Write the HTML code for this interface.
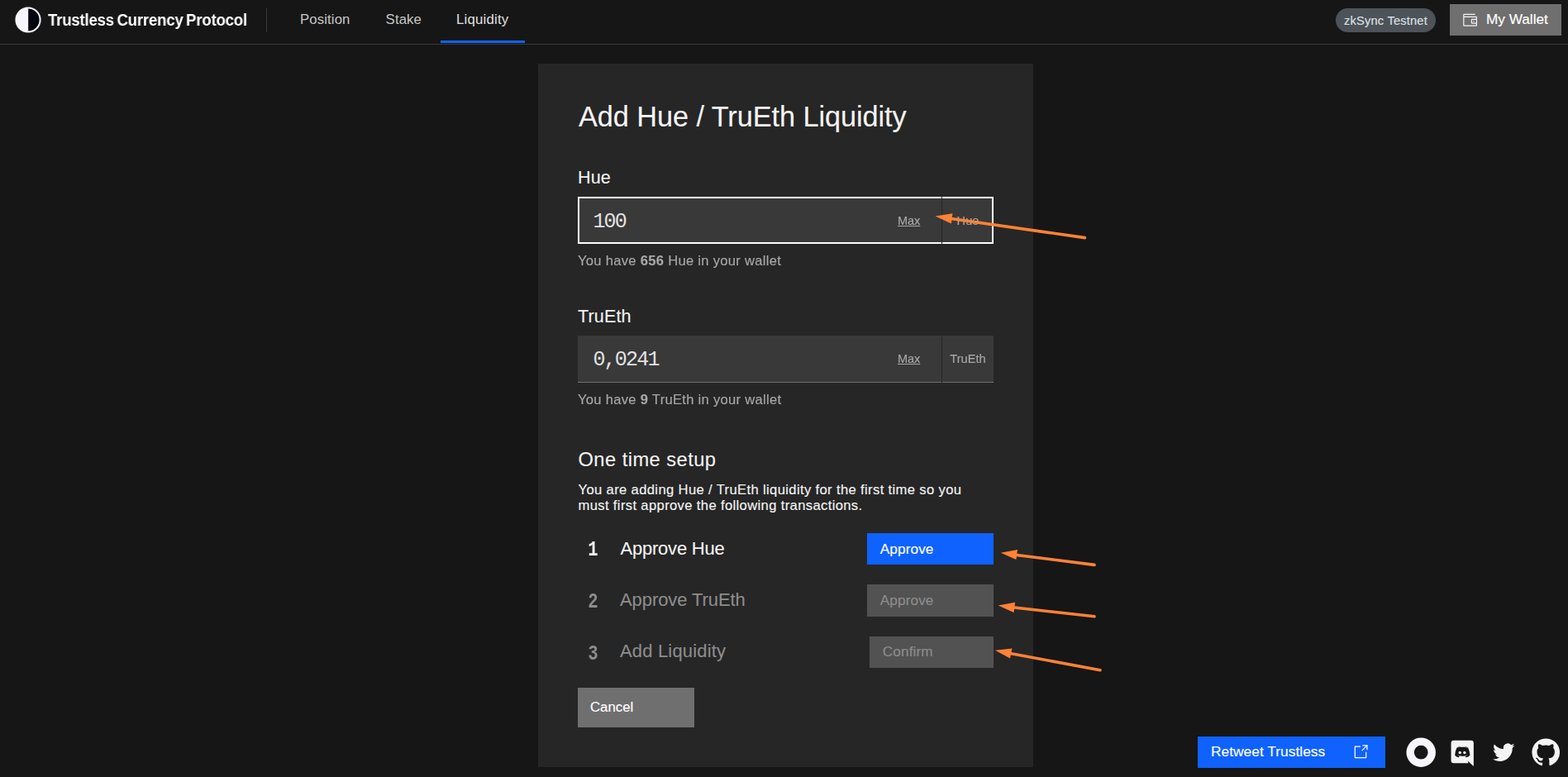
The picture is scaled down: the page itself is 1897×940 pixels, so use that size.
<!DOCTYPE html>
<html lang="en">
<head>
<meta charset="utf-8">
<title>Trustless Currency Protocol - Add Liquidity</title>
<style>
*{box-sizing:border-box;margin:0;padding:0}
html,body{width:1897px;height:940px;overflow:hidden;background:#161616}
body{font-family:"Liberation Sans",sans-serif;color:#f4f4f4;position:relative;-webkit-font-smoothing:auto}
a{color:inherit;text-decoration:none}
button{font-family:inherit;border:0;cursor:pointer}
.abs{position:absolute;white-space:nowrap}

/* ---------- header ---------- */
header{position:absolute;left:0;top:0;width:1897px;height:54px;border-bottom:1px solid #393939;background:#161616}
.logo{position:absolute;left:17.5px;top:8px;width:32px;height:32px}
.brand{left:57.5px;top:11.5px;height:24px;line-height:24px;font-size:20.3px;font-weight:700;letter-spacing:-.25px;word-spacing:-1.5px;color:#fff;transform:scaleX(.92);transform-origin:0 50%;will-change:transform}
.vdiv{position:absolute;left:322px;top:10px;width:1px;height:29px;background:#393939}
nav a{position:absolute;top:0;height:53px;line-height:48px;font-size:16.8px;letter-spacing:.1px;color:#c6c6c6;padding:0 19px;white-space:nowrap}
nav a.on{color:#e0e0e0}
nav a.on::after{content:"";position:absolute;left:0;right:0;bottom:1px;height:3px;background:#0f62fe}
.tag{left:1616px;top:10px;width:121px;height:29px;border-radius:15px;background:#4d5358;color:#dde1e6;font-size:14.6px;line-height:31px;text-align:center;letter-spacing:.22px}
.wallet{position:absolute;left:1754px;top:5px;width:135px;height:38px;background:#6f6f6f;color:#fff;font-size:17.2px;letter-spacing:0;line-height:36px;text-align:left;padding:0 0 2px 44px;white-space:nowrap}
.wallet svg{position:absolute;left:14.6px;top:9.8px;width:19.2px;height:19.2px;fill:#f4f4f4}

/* ---------- card ---------- */
main{position:absolute;left:651px;top:77px;width:599px;height:851px;background:#262626}
h1{left:49px;top:41.5px;font-size:34.3px;line-height:44px;font-weight:400;color:#f4f4f4;letter-spacing:-.07px}
.lbl{left:48px;font-size:21.6px;line-height:28px;color:#f4f4f4;font-weight:400;letter-spacing:.12px}
.field{position:absolute;left:48px;width:503px;height:57px;background:#393939;border-bottom:1px solid #6f6f6f}
.field.focus{border-bottom:0;outline:2px solid #fff;outline-offset:-2px}
.field input{position:absolute;left:0;top:0;width:440px;height:100%;background:transparent;border:0;outline:0;color:#e2e2e2;font-family:"Liberation Mono",monospace;font-size:25px;letter-spacing:-1.8px;padding:3px 0 0 18.4px;line-height:30px}
.field .sep{position:absolute;left:440px;top:0;width:1px;height:57px;background:#262626}
.field.focus .sep{top:0;height:57px}
.field.focus .max,.field.focus .unit{top:1px}
.field .max{position:absolute;left:387px;top:0;line-height:57px;font-size:14.6px;letter-spacing:-.1px;color:#a8a8a8;text-decoration:underline}
.field .unit{position:absolute;left:441px;top:0;width:62px;line-height:57px;font-size:14.6px;color:#a8a8a8;text-align:center}
.help{left:48px;font-size:16.6px;line-height:20px;color:#a8a8a8;letter-spacing:.28px}
.help b{font-weight:700}
.help,.field .max,.field .unit{will-change:transform}
.help,.desc,.field .unit,.field .max,.btn,.cancel,.wallet,.tag,.retweet{-webkit-text-stroke:.14px currentColor}
h1,h2,.lbl,ol li .t{-webkit-text-stroke:.1px currentColor}
h2{left:48.5px;top:464px;font-size:23.7px;line-height:30px;font-weight:400;letter-spacing:.45px}
.desc{position:absolute;left:48.5px;top:506px;width:480px;font-size:16.6px;line-height:19.3px;color:#f4f4f4;letter-spacing:.36px}
ol{list-style:none}
ol li{position:absolute;left:48px;width:503px;height:40px}
ol li .n{position:absolute;left:11.3px;top:2px;width:15px;text-align:center;line-height:40px;font-family:"Liberation Mono",monospace;font-size:25px;font-weight:700;color:#f4f4f4;transform:scaleX(.8);transform-origin:50% 50%;will-change:transform}
ol li .t{position:absolute;left:51px;top:0;line-height:40px;font-size:22px;letter-spacing:-.08px;color:#f4f4f4;white-space:nowrap}
ol li.off .n,ol li.off .t{color:#8d8d8d}
.btn{position:absolute;height:38px;line-height:20px;font-size:17.2px;letter-spacing:.1px;text-align:left;padding:0 0 0 15.8px;color:#fff;background:#0f62fe;white-space:nowrap}
.btn.dis{background:#525252;color:#8d8d8d;padding-bottom:2px}
.cancel{position:absolute;left:48px;top:755px;width:141px;height:48px;background:#6f6f6f;color:#fff;font-size:16.8px;line-height:48px;text-align:left;padding-left:15px}

/* ---------- footer ---------- */
.retweet{position:absolute;left:1449px;top:891px;width:227px;height:38px;background:#0f62fe;color:#fff;font-size:17.4px;line-height:36px;padding-left:16px;white-space:nowrap}
.retweet svg{position:absolute;left:187px;top:9.2px;width:20px;height:19.6px;fill:#fff}
.soc{position:absolute;top:890.5px;width:38.4px;height:38.4px;fill:#f4f4f4}
.arrows{position:absolute;left:0;top:0;width:1897px;height:940px;pointer-events:none}
</style>
</head>
<body>
<header>
  <svg class="logo" viewBox="0 0 32 32" aria-hidden="true"><circle cx="16" cy="16" r="15.6" fill="#f6f6fc"/><path d="M16.2 2.6a13.4 13.4 0 0 1 0 26.8z" fill="#05060f"/></svg>
  <a class="abs brand" href="#">Trustless Currency Protocol</a>
  <span class="vdiv"></span>
  <nav>
    <a href="#" style="left:344px">Position</a>
    <a href="#" style="left:447.6px">Stake</a>
    <a href="#" class="on" style="left:533px;width:102px;letter-spacing:.2px">Liquidity</a>
  </nav>
  <span class="abs tag">zkSync Testnet</span>
  <button class="wallet" type="button"><svg viewBox="0 0 32 32" aria-hidden="true"><path d="M22 17H24V19H22z"/><path d="M28,8H4V5H26V3H4A2,2,0,0,0,2,5V26a2,2,0,0,0,2,2H28a2,2,0,0,0,2-2V10A2,2,0,0,0,28,8ZM4,26V10H28v3H20a2,2,0,0,0-2,2v6a2,2,0,0,0,2,2h8v3ZM28,15v6H20V15Z"/></svg>My Wallet</button>
</header>

<main>
  <h1 class="abs">Add Hue / TruEth Liquidity</h1>

  <label class="abs lbl" style="top:124px" for="hue">Hue</label>
  <div class="field focus" style="top:161px">
    <input id="hue" type="text" value="100">
    <a class="max" href="#">Max</a>
    <span class="sep"></span>
    <span class="unit">Hue</span>
  </div>
  <p class="abs help" style="top:229px">You have <b>656</b> Hue in your wallet</p>

  <label class="abs lbl" style="top:292px" for="trueth">TruEth</label>
  <div class="field" style="top:329px">
    <input id="trueth" type="text" value="0,0241">
    <a class="max" href="#">Max</a>
    <span class="sep"></span>
    <span class="unit">TruEth</span>
  </div>
  <p class="abs help" style="top:397px">You have <b>9</b> TruEth in your wallet</p>

  <h2 class="abs">One time setup</h2>
  <p class="desc">You are adding Hue / TruEth liquidity for the first time so you must first approve the following transactions.</p>

  <ol>
    <li style="top:567px"><span class="n">1</span><span class="t" style="left:51.5px;letter-spacing:-.22px">Approve Hue</span><button class="btn" type="button" style="left:350px;top:1px;width:153px">Approve</button></li>
    <li class="off" style="top:629px"><span class="n" style="top:3px">2</span><span class="t">Approve TruEth</span><button class="btn dis" type="button" disabled style="left:350px;top:1px;width:153px;height:39px">Approve</button></li>
    <li class="off" style="top:691px"><span class="n" style="top:4px">3</span><span class="t" style="letter-spacing:.17px">Add Liquidity</span><button class="btn dis" type="button" disabled style="left:353px;top:2px;width:150px">Confirm</button></li>
  </ol>

  <button class="cancel" type="button">Cancel</button>
</main>

<a class="retweet" href="#">Retweet Trustless<svg viewBox="0 0 16 16" aria-hidden="true"><path d="M13,14H3c-0.6,0-1-0.4-1-1V3c0-0.6,0.4-1,1-1h5v1H3v10h10V8h1v5C14,13.6,13.6,14,13,14z"/><path d="M10 1L10 2 13.3 2 9 6.3 9.7 7 14 2.7 14 6 15 6 15 1z"/></svg></a>

<svg class="soc" style="left:1699.9px" viewBox="0 0 32 32" aria-hidden="true"><path fill-rule="evenodd" fill="#f6f6fc" d="M16 1.2a14.8 14.8 0 1 0 0 29.6a14.8 14.8 0 1 0 0-29.6zM16 9a7 7 0 1 1 0 14a7 7 0 1 1 0-14z"/></svg>
<svg class="soc" style="left:1750px" viewBox="0 0 32 32" aria-hidden="true"><path d="M13.647,14.907a1.4482,1.4482,0,1,0,1.326,1.443A1.385,1.385,0,0,0,13.647,14.907Zm4.745,0a1.4482,1.4482,0,1,0,1.326,1.443A1.385,1.385,0,0,0,18.392,14.907Z"/><path d="M24.71,4H7.29A2.6714,2.6714,0,0,0,4.625,6.678V24.254A2.6714,2.6714,0,0,0,7.29,26.932H22.032l-.689-2.405,1.664,1.547L24.58,27.53,27.375,30V6.678A2.6714,2.6714,0,0,0,24.71,4ZM19.692,20.978s-.468-.559-.858-1.053a4.1021,4.1021,0,0,0,2.353-1.547,7.4391,7.4391,0,0,1-1.495.767,8.5564,8.5564,0,0,1-1.885.559,9.1068,9.1068,0,0,1-3.367-.013,10.9127,10.9127,0,0,1-1.911-.559,7.6184,7.6184,0,0,1-.949-.442c-.039-.026-.078-.039-.117-.065a.18.18,0,0,1-.052-.039c-.234-.13-.364-.221-.364-.221a4.0432,4.0432,0,0,0,2.275,1.534c-.39.494-.871,1.079-.871,1.079a4.7134,4.7134,0,0,1-3.965-1.976,17.4091,17.4091,0,0,1,1.872-7.579,6.4285,6.4285,0,0,1,3.653-1.365l.13.156a8.77,8.77,0,0,0-3.419,1.703s.286-.156.767-.377a9.7625,9.7625,0,0,1,2.951-.819,1.2808,1.2808,0,0,1,.221-.026,11,11,0,0,1,2.626-.026A10.5971,10.5971,0,0,1,21.2,11.917a8.6518,8.6518,0,0,0-3.237-1.651l.182-.208a6.4285,6.4285,0,0,1,3.653,1.365,17.4091,17.4091,0,0,1,1.872,7.579A4.752,4.752,0,0,1,19.692,20.978Z"/></svg>
<svg class="soc" style="left:1800.4px" viewBox="0 0 32 32" aria-hidden="true"><path d="M11.92,24.94A12.76,12.76,0,0,0,24.76,12.1c0-.2,0-.39,0-.59A9.4,9.4,0,0,0,27,9.18a9.31,9.31,0,0,1-2.59.71,4.56,4.56,0,0,0,2-2.5,8.89,8.89,0,0,1-2.86,1.1,4.52,4.52,0,0,0-7.7,4.11,12.79,12.79,0,0,1-9.3-4.71,4.51,4.51,0,0,0,1.4,6,4.47,4.47,0,0,1-2-.56v.05A4.53,4.53,0,0,0,9.5,17.83a4.53,4.53,0,0,1-2,.08A4.51,4.51,0,0,0,11.68,21,9.05,9.05,0,0,1,6.07,23,9.77,9.77,0,0,1,5,22.91a12.77,12.77,0,0,0,6.92,2"/></svg>
<svg class="soc" style="left:1851px" viewBox="0 0 32 32" aria-hidden="true"><path fill-rule="evenodd" d="M16,2a14,14,0,0,0-4.43,27.28c.7.13,1-.3,1-.67s0-1.21,0-2.38c-3.89.84-4.71-1.88-4.71-1.88A3.71,3.71,0,0,0,6.24,22.3c-1.27-.86.1-.85.1-.85A2.94,2.94,0,0,1,8.48,22.9a3,3,0,0,0,4.08,1.16,2.93,2.93,0,0,1,.88-1.87c-3.1-.36-6.37-1.56-6.37-6.92a5.4,5.4,0,0,1,1.44-3.76,5,5,0,0,1,.14-3.7s1.17-.38,3.85,1.43a13.3,13.3,0,0,1,7,0c2.67-1.81,3.84-1.43,3.84-1.43a5,5,0,0,1,.14,3.7,5.4,5.4,0,0,1,1.44,3.76c0,5.38-3.27,6.56-6.39,6.91a3.33,3.33,0,0,1,.95,2.59c0,1.87,0,3.38,0,3.84s.25.81,1,.67A14,14,0,0,0,16,2Z"/></svg>

<svg class="arrows" viewBox="0 0 1897 940" aria-hidden="true">
  <g stroke="#ff8236" stroke-width="3.6" stroke-linecap="round" fill="#ff8236" stroke-linejoin="miter">
    <line x1="1149" y1="264.3" x2="1312.5" y2="287.6"/>
    <path d="M1131.5 261.6L1152.4 258.2L1150.8 270.6Z" stroke="none"/>
    <line x1="1228" y1="671.2" x2="1324" y2="683.4"/>
    <path d="M1210.8 668.8L1231 665L1229.4 677Z" stroke="none"/>
    <line x1="1225" y1="734.7" x2="1324" y2="745.8"/>
    <path d="M1207.6 732.6L1228 728.8L1226.6 741Z" stroke="none"/>
    <line x1="1221" y1="790.2" x2="1331" y2="810.8"/>
    <path d="M1204 786.8L1224.4 784.4L1222 796.4Z" stroke="none"/>
  </g>
</svg>
</body>
</html>
